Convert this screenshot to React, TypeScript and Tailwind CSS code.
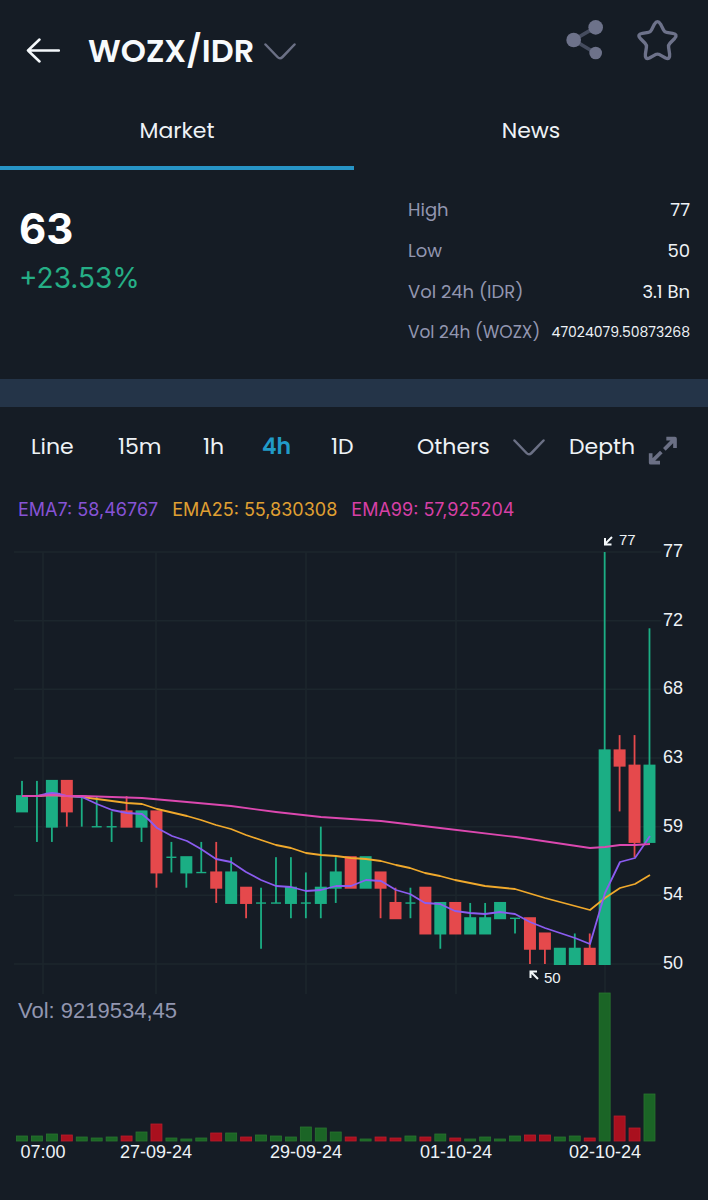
import React from 'react';

type Candle = [open: number, close: number, high: number, low: number, volume: number];

// One entry per 4h candle; volume is already in chart units
const candles: Candle[] = [
    [60, 61, 62, 60, 5], [61, 61, 62, 58, 5], [59, 62, 62, 58, 7], [62, 60, 62, 59, 6],
    [61, 61, 61, 59, 4], [59, 59, 61, 59, 3], [59, 59, 60, 58, 4], [60, 59, 61, 59, 5],
    [59, 60, 60, 58, 9], [60, 56, 60, 55, 17], [57, 57, 58, 56, 3], [56, 57, 57, 55, 2],
    [56, 56, 58, 56, 3], [56, 55, 58, 54, 8], [54, 56, 57, 54, 8], [55, 54, 55, 53, 4],
    [54, 54, 55, 51, 6], [54, 54, 57, 54, 5], [54, 55, 57, 53, 4], [54, 54, 56, 53, 14],
    [54, 55, 59, 53, 13], [55, 56, 57, 54, 9], [57, 55, 57, 55, 4], [55, 57, 57, 55, 2],
    [56, 55, 56, 53, 4], [54, 53, 55, 53, 3], [54, 54, 55, 53, 5], [55, 52, 55, 52, 4],
    [52, 54, 54, 51, 7], [54, 52, 54, 52, 3], [52, 53, 54, 52, 2], [52, 53, 54, 52, 4],
    [53, 54, 54, 53, 2], [53, 53, 53, 52, 5], [53, 51, 53, 50, 6], [52, 51, 52, 50, 6],
    [50, 51, 51, 50, 4], [50, 51, 52, 50, 5], [51, 50, 52, 50, 3], [50, 64, 77, 50, 148],
    [64, 63, 65, 60, 25], [63, 58, 65, 57, 13], [58, 63, 72, 58, 47],
];

const ema7 = '22,266 37,266 45,264 52,263 60,264 67,266 82,267 97,274 112,280 127,283 142,284 149,290 157,298 172,306 187,311 201,319 216,329 231,332 246,342 261,350 276,356 291,357 306,361 321,360 336,356 351,356 366,350 381,351 396,360 410,364 425,373 440,374 455,381 470,383 485,384 500,382 515,384 530,392 545,398 575,408 590,414 605,363 620,332 635,328 650,306';
const ema25 = '22,266 37,266 52,265 67,266 82,267 97,269 127,273 142,274 157,279 187,286 201,290 216,295 231,299 246,305 261,310 276,315 291,318 306,323 321,325 336,326 351,328 366,329 381,331 396,335 410,338 425,343 440,346 455,350 485,356 515,359 545,368 590,380 605,368 620,358 635,354 650,345';
const ema99 = '22,266 37,266 52,265 67,266 82,266 142,268 187,272 231,276 276,282 321,287 381,291 440,298 516,307 590,318 605,317 620,315 635,315 650,314';

const priceLabels = [77, 72, 68, 63, 59, 54, 50];
const dateLabels = [
    { x: 43, text: '07:00' },
    { x: 156, text: '27-09-24' },
    { x: 306, text: '29-09-24' },
    { x: 456, text: '01-10-24' },
    { x: 605, text: '02-10-24' },
];

const stats = [
    { label: 'High', value: '77' },
    { label: 'Low', value: '50' },
    { label: 'Vol 24h (IDR)', value: '3.1 Bn' },
    { label: 'Vol 24h (WOZX)', value: '47024079.50873268', small: true },
];

const priceY = (price: number) => 434 - (price - 50) * (412 / 27);
const candleX = (index: number) => 22 + index * 14.94;

const Chevron = () => (
    <svg aria-hidden="true" className="w-8 h-5 shrink-0 pointer-events-none" viewBox="0 0 32 20" fill="none" stroke="#6b7085" strokeWidth="2.500" strokeLinecap="round">
        <path d="M1.500 3.500 L13.5 16 Q16 18.500 18.500 16 L30.500 3.500" />
    </svg>
);

const Header = () => (
    <header className="flex h-[102px] items-center pl-6 pr-[29px]">
        <button aria-label="Back" className="shrink-0">
            <svg className="w-9 h-7" viewBox="0 0 36 28" fill="none" stroke="#f4f8fb" strokeWidth="2.500" strokeLinecap="round" strokeLinejoin="round">
                <path d="M35 13.500 H4 M15.500 2.500 L4 13.500 L15.500 24.500" />
            </svg>
        </button>
        <label className="flex items-center gap-[10px] pl-7">
            <select aria-label="Trading pair" className="appearance-none field-sizing-content bg-transparent text-[32px] leading-10 font-semibold text-[#f7fafc]">
                <option>WOZX/IDR</option>
            </select>
            <Chevron />
        </label>
        <div className="ml-auto flex gap-8 pb-[22px]">
            <button aria-label="Share">
                <svg className="w-[38px] h-10" viewBox="0 0 112 120">
                    <path d="M87 22 L22 60 L87 99" fill="none" stroke="#454c5e" strokeWidth="11" />
                    <g fill="#6d728a">
                        <circle cx="88" cy="22" r="22" />
                        <circle cx="22" cy="60" r="22" />
                        <circle cx="88" cy="99" r="19" />
                    </g>
                </svg>
            </button>
            <button aria-label="Add to favorites">
                <svg className="w-[43px] h-[43px]" viewBox="0 0 128 128" fill="none" stroke="#6d728a" strokeWidth="10" strokeLinejoin="round">
                    <path d="M55 15 Q64 1 73 15 L82 33 Q85 39 91 40 L109 43 Q126 46 115 58 L101 72 Q96 77 97 84 L100 104 Q102 122 88 116 L70 106 Q64 103 58 106 L40 116 Q26 122 28 104 L31 84 Q32 77 27 72 L13 58 Q2 46 19 43 L37 40 Q43 39 46 33 Z" />
                </svg>
            </button>
        </div>
    </header>
);

const Tabs = () => (
    <nav className="grid grid-cols-2 text-[22px] leading-7 text-[#eef2f6]">
        <button className="border-b-4 border-[#2794c6] pt-[15px] pb-[21px]">Market</button>
        <button className="border-b-4 border-transparent pt-[15px] pb-[21px]">News</button>
    </nav>
);

const Summary = () => (
    <section className="flex justify-between pl-[19px] pr-[18px] pt-[19px] pb-[26px]">
        <div className="pt-4 font-['Inter',sans-serif]">
            <p className="text-[42px] leading-[48px] font-bold text-white">63</p>
            <p className="text-[28px] leading-[50px] text-[#25af86]">+23.53%</p>
        </div>
        <dl className="w-[282px] text-lg leading-[41px]">
            {stats.map((s) => (
                <div key={s.label} className="flex justify-between whitespace-nowrap">
                    <dt className={s.small ? 'text-[17px] text-[#9296b0]' : 'text-[#9296b0]'}>{s.label}</dt>
                    <dd className={s.small ? 'text-[14px] text-[#eef2f6]' : 'text-[#eef2f6]'}>{s.value}</dd>
                </div>
            ))}
        </dl>
    </section>
);

const Intervals = () => (
    <div className="grid grid-cols-[87fr_85fr_59fr_69fr_86fr_152fr_79fr_60fr] items-center pl-[31px] pt-5 text-[22px] leading-10 text-[#eef2f6]">
        <button className="text-left">Line</button>
        <button className="text-left">15m</button>
        <button className="text-left">1h</button>
        <button className="text-left font-semibold text-[#219bc8]">4h</button>
        <button className="text-left">1D</button>
        <label className="flex items-center justify-between pr-6">
            <select aria-label="Other intervals" className="appearance-none field-sizing-content bg-transparent">
                <option>Others</option>
            </select>
            <Chevron />
        </label>
        <button className="text-left">Depth</button>
        <button aria-label="Full screen" className="pt-2">
            <svg className="w-[30px] h-[30px]" viewBox="0 0 90 90" fill="none" stroke="#6b7085" strokeWidth="11" strokeLinejoin="round">
                <path d="M55 8 H81 V36 M81 8 L49 40 M8 52 V80 H36 M8 80 L40 48" />
            </svg>
        </button>
    </div>
);

const Chart = () => (
    <svg role="img" aria-label="WOZX/IDR 4h candles" className="block w-full h-auto" viewBox="0 0 708 666" fontFamily="'Liberation Sans', Arial, sans-serif">
        <g stroke="#1c262d" strokeWidth="1.500">
            {priceLabels.map((p, i) => (
                <line key={p} x1="14" x2="661" y1={22 + (i * 412) / 6} y2={22 + (i * 412) / 6} />
            ))}
            {dateLabels.map((d) => (
                <line key={d.x} x1={d.x} x2={d.x} y1="22" y2="464" />
            ))}
        </g>

        {candles.map(([open, close, high, low, volume], i) => {
            const x = candleX(i);
            const down = close < open;
            const top = priceY(Math.max(open, close));
            const bottom = priceY(Math.min(open, close));
            const flat = open === close;
            return (
                <g key={i} fill={down ? '#e5494c' : '#1bae84'}>
                    <rect x={x - 0.9} width="1.8" y={priceY(high)} height={priceY(low) - priceY(high)} />
                    {flat
                        ? <rect x={x - 5} width="10" y={top - 0.6} height="1.4" />
                        : <rect x={x - 6} width="12" y={top - 1} height={bottom - top + 2} />}
                    <rect x={x - 5.500} width="11" y={611 - volume} height={volume} fill={down ? '#a9101e' : '#1b6526'} stroke={down ? '#b91d2c' : '#28752f'} strokeWidth="0.800" />
                </g>
            );
        })}

        <g fill="none" strokeWidth="1.800" strokeLinejoin="round">
            <polyline points={ema25} stroke="#f0a92c" />
            <polyline points={ema7} stroke="#8b5cf0" />
            <polyline points={ema99} stroke="#dc48b0" />
        </g>

        <g stroke="#f4f8fb" strokeWidth="2" fill="none">
            <path d="M612 7 L605 14 M605 8 V14.500 H611.500" />
            <path d="M538 449 L531 442 M530.500 448 V441.500 H537" />
        </g>
        <g fill="#eef2f6">
            <text x="619" y="15" fontSize="15">77</text>
            <text x="544" y="453" fontSize="15">50</text>
            {priceLabels.map((p, i) => (
                <text key={p} x="663" y={27 + (i * 412) / 6} fontSize="18">{p}</text>
            ))}
            {dateLabels.map((d) => (
                <text key={d.x} x={d.x} y="628" fontSize="18" textAnchor="middle">{d.text}</text>
            ))}
        </g>
        <text x="18" y="488" fontSize="22" fill="#9296b0">Vol: 9219534,45</text>
    </svg>
);

const App: React.FC = () => (
    <main className="min-h-screen bg-[#151c25] font-['Poppins','Inter',sans-serif]">
        <Header />
        <Tabs />
        <Summary />
        <div className="h-7 bg-[#243448]" />
        <Intervals />
        <div className="flex gap-[14px] pl-[18px] pt-[31px] pb-2 font-['Inter',sans-serif] text-lg leading-6 whitespace-nowrap">
            <span className="text-[#8753d6]">EMA7: 58,46767</span>
            <span className="text-[#e0a032]">EMA25: 55,830308</span>
            <span className="text-[#d740a6]">EMA99: 57,925204</span>
        </div>
        <Chart />
    </main>
);

export default App;
